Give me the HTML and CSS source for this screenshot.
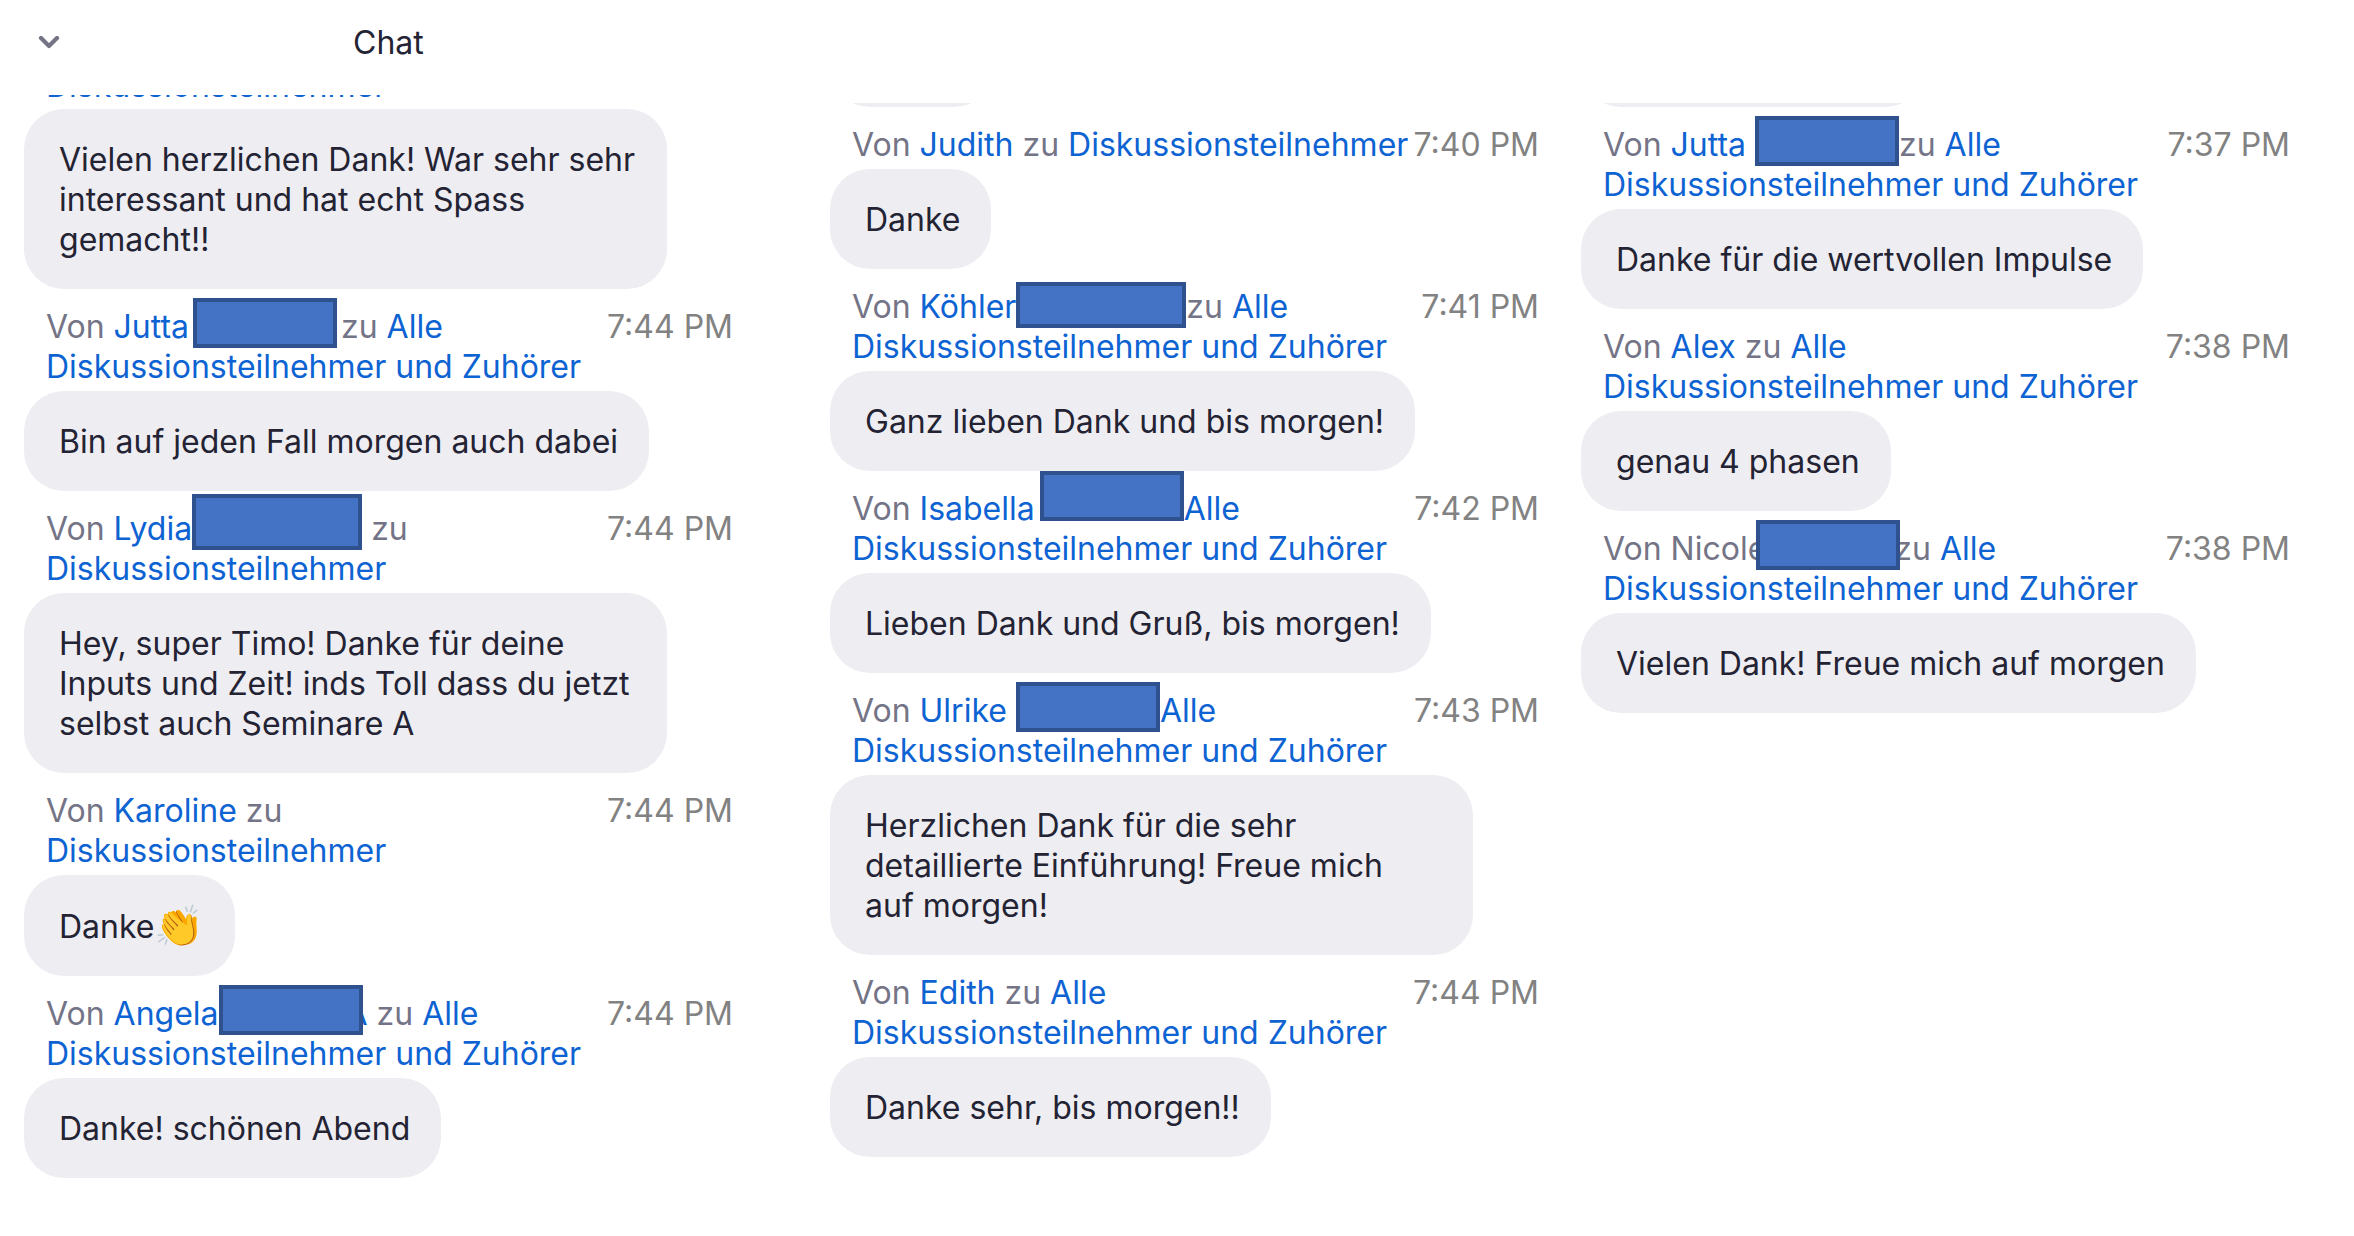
FILE: index.html
```
<!DOCTYPE html>
<html lang="de">
<head>
<meta charset="UTF-8">
<meta name="viewport" content="width=device-width, initial-scale=1.0">
<title>Chat</title>
<link rel="stylesheet" href="styles.css">
</head>
<body>
<header class="titlebar">
  <button class="collapse" type="button" aria-label="Chat einklappen">
    <svg width="22" height="14" viewBox="0 0 22 14" aria-hidden="true">
      <path d="M3 2 L11 10 L19 2" fill="none" stroke="currentColor" stroke-width="4.2" stroke-linecap="round" stroke-linejoin="round"/>
    </svg>
  </button>
  <h1>Chat</h1>
</header>

<main class="chat">
  <section class="column">
    <!-- rest of a message scrolled out at the top -->
    <div class="cut cut-meta"><a href="#">Diskussionsteilnehmer</a></div>
    <p class="bubble">Vielen herzlichen Dank! War sehr sehr interessant und hat echt Spass gemacht!!</p>

    <div class="meta">
      <p class="sender">Von <a href="#">Jutta</a><span class="redacted"></span>zu <a href="#">Alle Diskussionsteilnehmer und Zuhörer</a></p>
      <time>7:44 PM</time>
    </div>
    <p class="bubble">Bin auf jeden Fall morgen auch dabei</p>

    <div class="meta">
      <p class="sender">Von <a href="#">Lydia</a><span class="redacted wide tall tight"></span> zu <a href="#">Diskussionsteilnehmer</a></p>
      <time>7:44 PM</time>
    </div>
    <p class="bubble">Hey, super Timo! Danke für deine Inputs und Zeit! inds Toll dass du jetzt selbst auch Seminare A</p>

    <div class="meta">
      <p class="sender">Von <a href="#">Karoline</a> zu <a href="#">Diskussionsteilnehmer</a></p>
      <time>7:44 PM</time>
    </div>
    <p class="bubble">Danke<span class="emoji">👏</span></p>

    <div class="meta">
      <p class="sender">Von <a href="#">Angela<span class="redacted over"></span>A</a> zu <a href="#">Alle Diskussionsteilnehmer und Zuhörer</a></p>
      <time>7:44 PM</time>
    </div>
    <p class="bubble">Danke! schönen Abend</p>
  </section>

  <section class="column">
    <div class="cut cut-bubble"><div class="bubble short"></div></div>

    <div class="meta">
      <p class="sender">Von <a href="#">Judith</a> zu <a href="#">Diskussionsteilnehmer</a></p>
      <time>7:40 PM</time>
    </div>
    <p class="bubble">Danke</p>

    <div class="meta">
      <p class="sender">Von <a href="#">Köhler</a><span class="redacted wide tight"></span>zu <a href="#">Alle Diskussionsteilnehmer und Zuhörer</a></p>
      <time>7:41 PM</time>
    </div>
    <p class="bubble">Ganz lieben Dank und bis morgen!</p>

    <div class="meta">
      <p class="sender">Von <a href="#">Isabella</a> <span class="redacted raised"></span><a href="#">Alle Diskussionsteilnehmer und Zuhörer</a></p>
      <time>7:42 PM</time>
    </div>
    <p class="bubble">Lieben Dank und Gruß, bis morgen!</p>

    <div class="meta">
      <p class="sender">Von <a href="#">Ulrike</a> <span class="redacted tight"></span><a href="#">Alle Diskussionsteilnehmer und Zuhörer</a></p>
      <time>7:43 PM</time>
    </div>
    <p class="bubble">Herzlichen Dank für die sehr detaillierte Einführung! Freue mich auf&nbsp;morgen!</p>

    <div class="meta">
      <p class="sender">Von <a href="#">Edith</a> zu <a href="#">Alle Diskussionsteilnehmer und Zuhörer</a></p>
      <time>7:44 PM</time>
    </div>
    <p class="bubble">Danke sehr, bis morgen!!</p>
  </section>

  <section class="column">
    <div class="cut cut-bubble"><div class="bubble long"></div></div>

    <div class="meta">
      <p class="sender">Von <a href="#">Jutta</a> <span class="redacted tight"></span>zu <a href="#">Alle Diskussionsteilnehmer und Zuhörer</a></p>
      <time>7:37 PM</time>
    </div>
    <p class="bubble">Danke für die wertvollen Impulse</p>

    <div class="meta">
      <p class="sender">Von <a href="#">Alex</a> zu <a href="#">Alle Diskussionsteilnehmer und Zuhörer</a></p>
      <time>7:38 PM</time>
    </div>
    <p class="bubble">genau 4 phasen</p>

    <div class="meta">
      <p class="sender">Von Nicole<span class="redacted inset"></span>zu <a href="#">Alle Diskussionsteilnehmer und Zuhörer</a></p>
      <time>7:38 PM</time>
    </div>
    <p class="bubble">Vielen Dank! Freue mich auf morgen</p>
  </section>
</main>
</body>
</html>
```
FILE: styles.css
```
* {
  box-sizing: border-box;
}
body {
  margin: 0;
  background-color: #fff;
  color: #232333;
  font-family: Inter, "Noto Sans", sans-serif;
  font-size: 32px;
  line-height: 40px;
}
h1, p {
  margin: 0;
}
a {
  color: #0e63d3;
  text-decoration: none;
}

/* title */
.titlebar {
  display: grid;
  grid-template-columns: 1fr auto 1fr;
  align-items: center;
  width: 33%;
  padding: 23px 0 32px;
}
.titlebar h1 {
  font-size: 32px;
  font-weight: 400;
}
.collapse {
  display: flex;
  justify-self: start;
  margin-left: 32px;
  padding: 6px;
  border: none;
  background: none;
  color: #747487;
  cursor: pointer;
}

/* columns */
.chat {
  display: flex;
  padding: 0 64px 0 24px;
}
.column {
  display: flex;
  flex: 1 1 0;
  flex-direction: column;
  align-items: flex-start;
  min-width: 0;
}
.column:nth-child(1) {
  margin-right: 97px;
}
.column:nth-child(2) {
  margin-right: 42px;
}

/* only the bottom edge of these is visible */
.cut {
  display: flex;
  align-items: flex-end;
  overflow: hidden;
}
.cut-meta {
  height: 14px;
  padding: 0 0 3px 22px;
}
.cut-bubble {
  height: 4px;
  margin-top: 8px;
}

/* messages */
.meta {
  display: flex;
  gap: 4px;
  align-self: stretch;
  padding: 18px 0 4px 22px;
}
.sender {
  flex: 1;
  color: #747487;
}
.meta time {
  color: #828282;
  white-space: nowrap;
}
.bubble {
  max-width: 643px;
  min-height: 100px;
  padding: 31px 31px 29px 35px;
  border-radius: 40px;
  background-color: #eeedf2;
}
.bubble.short {
  width: 164px;
}
.bubble.long {
  width: 344px;
}
.emoji {
  font-size: 40px;
  line-height: 1;
  vertical-align: -2px;
}

/* hides the surname */
.redacted {
  display: inline-block;
  position: relative;
  width: 144px;
  height: 50px;
  margin: -30px 4px -10px;
  border: 4px solid #2f528f;
  background-color: #4472c4;
}
.redacted.wide {
  width: 170px;
  height: 46px;
}
.redacted.tall {
  height: 56px;
}
.redacted.tight {
  margin-left: 0;
  margin-right: 0;
}
.redacted.over {
  margin-left: 0;
  margin-right: -17px;
}
.redacted.inset {
  margin-left: -10px;
  margin-right: -6px;
}
.redacted.raised {
  margin-left: -4px;
  margin-right: 0;
  vertical-align: 9px;
}
```
